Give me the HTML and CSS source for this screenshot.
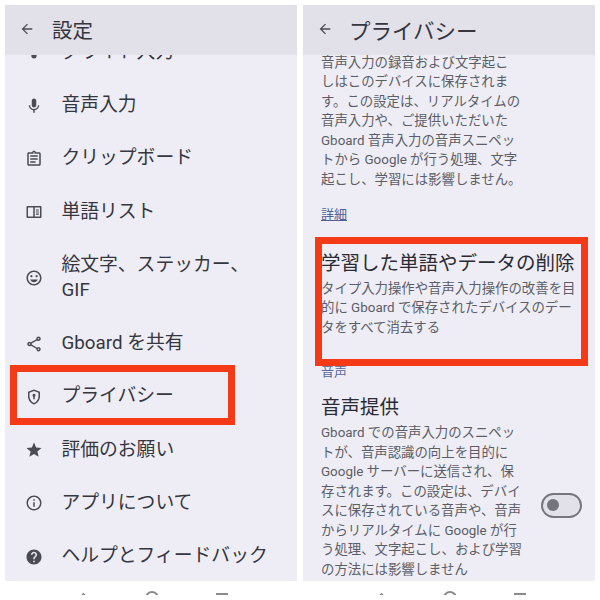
FILE: index.html
```html
<!DOCTYPE html>
<html lang="ja">
<head>
    <meta charset="UTF-8">
    <meta name="viewport" content="width=device-width, initial-scale=1.0">
    <title>Gboard 設定</title>
    <link rel="stylesheet" href="styles.css">
</head>
<body>

    <div class="screens">
        <section class="phone">
            <header class="appbar">
                <svg class="back" viewBox="0 0 24 24"><path d="M20 11H7.830l5.590-5.590L12 4l-8 8 8 8 1.410-1.410L7.830 13H20v-2z"/></svg>
                <h1 class="title title-settings">設定</h1>
            </header>
            <main class="scroll">
                <ul class="menu">
                    <li class="menu-item">
                        <svg class="icon" viewBox="0 0 24 24"><circle cx="12" cy="17" r="3.500"/></svg>
                        <span>グライド入力</span>
                    </li>
                    <li class="menu-item">
                        <svg class="icon" viewBox="0 0 24 24"><path d="M12 14c1.660 0 2.990-1.340 2.990-3L15 5c0-1.660-1.340-3-3-3S9 3.340 9 5v6c0 1.660 1.340 3 3 3zm5.300-3c0 3-2.540 5.100-5.300 5.100S6.700 14 6.700 11H5c0 3.410 2.720 6.230 6 6.720V21h2v-3.280c3.280-.48 6-3.300 6-6.720h-1.700z"/></svg>
                        <span>音声入力</span>
                    </li>
                    <li class="menu-item">
                        <svg class="icon" viewBox="0 0 24 24"><path d="M19 3h-4.180C14.400 1.840 13.300 1 12 1s-2.400.84-2.820 2H5c-1.100 0-2 .9-2 2v14c0 1.100.9 2 2 2h14c1.100 0 2-.9 2-2V5c0-1.100-.9-2-2-2zm-7 0c.55 0 1 .45 1 1s-.45 1-1 1-1-.45-1-1 .45-1 1-1zm7 16H5V5h14v14z"/><path d="M7 7h10v2H7zM7 11h10v2H7zM7 15h7v2H7z"/></svg>
                        <span>クリップボード</span>
                    </li>
                    <li class="menu-item">
                        <svg class="icon" viewBox="0 0 24 24"><path d="M3 4h18c.55 0 1 .45 1 1v14c0 .55-.45 1-1 1H3c-.55 0-1-.45-1-1V5c0-.55.45-1 1-1zm1 2v12h7V6H4zm9 0v12h7V6h-7z"/><path d="M14.500 8.500h4v1.500h-4zM14.500 11.250h4v1.500h-4zM14.500 14h4v1.500h-4z"/></svg>
                        <span>単語リスト</span>
                    </li>
                    <li class="menu-item menu-item-tall">
                        <svg class="icon" viewBox="0 0 24 24"><path d="M12 2C6.480 2 2 6.480 2 12s4.480 10 10 10 10-4.480 10-10S17.520 2 12 2zm0 18c-4.420 0-8-3.580-8-8s3.580-8 8-8 8 3.580 8 8-3.580 8-8 8z"/><circle cx="8.500" cy="9.500" r="1.500"/><circle cx="15.500" cy="9.500" r="1.500"/><path d="M12 17.500c2.330 0 4.310-1.460 5.110-3.500H6.890c.8 2.040 2.780 3.500 5.110 3.500z"/></svg>
                        <span>絵文字、ステッカー、<br>GIF</span>
                    </li>
                    <li class="menu-item">
                        <svg class="icon" viewBox="0 0 24 24"><path d="M18 16.080c-.76 0-1.440.3-1.960.77L8.910 12.700c.05-.23.09-.46.09-.7s-.04-.47-.09-.7l7.050-4.110c.54.500 1.250.81 2.040.81 1.660 0 3-1.340 3-3s-1.340-3-3-3-3 1.340-3 3c0 .24.04.47.09.7L8.040 9.810C7.500 9.310 6.790 9 6 9c-1.660 0-3 1.340-3 3s1.340 3 3 3c.79 0 1.500-.31 2.040-.81l7.120 4.160c-.05.21-.08.43-.08.650 0 1.610 1.310 2.920 2.920 2.920 1.610 0 2.920-1.310 2.920-2.920s-1.310-2.920-2.920-2.920zM18 4c.55 0 1 .45 1 1s-.45 1-1 1-1-.45-1-1 .45-1 1-1zM6 13c-.55 0-1-.45-1-1s.45-1 1-1 1 .45 1 1-.45 1-1 1zm12 7.020c-.55 0-1-.45-1-1s.45-1 1-1 1 .45 1 1-.45 1-1 1z"/></svg>
                        <span>Gboard を共有</span>
                    </li>
                    <li class="menu-item">
                        <svg class="icon" viewBox="0 0 24 24"><path d="M12 2 4 5v6.090c0 5.050 3.410 9.760 8 10.910 4.590-1.150 8-5.860 8-10.910V5l-8-3zm6 9.090c0 4-2.550 7.700-6 8.830-3.450-1.130-6-4.820-6-8.830V6.390l6-2.250 6 2.250v4.700z"/><path d="M12 7.800a2 2 0 0 0-1 3.730V15h2v-3.470a2 2 0 0 0-1-3.730z"/></svg>
                        <span>プライバシー</span>
                    </li>
                    <li class="menu-item">
                        <svg class="icon" viewBox="0 0 24 24"><path d="M12 17.270 18.180 21l-1.640-7.030L22 9.240l-7.190-.61L12 2 9.190 8.630 2 9.240l5.460 4.730L5.820 21z"/></svg>
                        <span>評価のお願い</span>
                    </li>
                    <li class="menu-item">
                        <svg class="icon" viewBox="0 0 24 24"><path d="M11 7h2v2h-2zm0 4h2v6h-2zm1-9C6.480 2 2 6.480 2 12s4.480 10 10 10 10-4.480 10-10S17.520 2 12 2zm0 18c-4.410 0-8-3.590-8-8s3.590-8 8-8 8 3.590 8 8-3.590 8-8 8z"/></svg>
                        <span>アプリについて</span>
                    </li>
                    <li class="menu-item">
                        <svg class="icon" viewBox="0 0 24 24"><path d="M12 2C6.480 2 2 6.480 2 12s4.480 10 10 10 10-4.480 10-10S17.520 2 12 2zm1 17h-2v-2h2v2zm2.070-7.750-.9.920C13.450 12.900 13 13.500 13 15h-2v-.5c0-1.100.45-2.100 1.170-2.830l1.240-1.260c.37-.36.59-.86.59-1.410 0-1.100-.9-2-2-2s-2 .9-2 2H8c0-2.210 1.790-4 4-4s4 1.790 4 4c0 .88-.36 1.680-.93 2.250z"/></svg>
                        <span>ヘルプとフィードバック</span>
                    </li>
                </ul>
            </main>
            <nav class="navbar">
                <span class="nav-back"></span>
                <span class="nav-home"></span>
                <span class="nav-recent"></span>
            </nav>
            <div class="highlight highlight-menu"></div>
        </section>

        <section class="phone">
            <header class="appbar">
                <svg class="back" viewBox="0 0 24 24"><path d="M20 11H7.830l5.590-5.590L12 4l-8 8 8 8 1.410-1.410L7.830 13H20v-2z"/></svg>
                <h1 class="title">プライバシー</h1>
            </header>
            <main class="scroll scroll-text">
                <p class="desc desc-intro">音声入力の録音および文字起こ<br>しはこのデバイスに保存されま<br>す。この設定は、リアルタイムの<br>音声入力や、ご提供いただいた<br>Gboard 音声入力の音声スニペッ<br>トから Google が行う処理、文字<br>起こし、学習には影響しません。</p>
                <a class="more" href="#">詳細</a>
                <div class="setting-delete">
                    <h2 class="setting-name">学習した単語やデータの削除</h2>
                    <p class="desc">タイプ入力操作や音声入力操作の改善を目<br>的に Gboard で保存されたデバイスのデー<br>タをすべて消去する</p>
                </div>
                <div class="section-label">音声</div>
                <div class="setting-voice">
                    <div>
                        <h2 class="setting-name">音声提供</h2>
                        <p class="desc">Gboard での音声入力のスニペッ<br>トが、音声認識の向上を目的に<br>Google サーバーに送信され、保<br>存されます。この設定は、デバイ<br>スに保存されている音声や、音声<br>からリアルタイムに Google が行<br>う処理、文字起こし、および学習<br>の方法には影響しません</p>
                    </div>
                    <span class="toggle"><span class="toggle-dot"></span></span>
                </div>
            </main>
            <nav class="navbar">
                <span class="nav-back"></span>
                <span class="nav-home"></span>
                <span class="nav-recent"></span>
            </nav>
            <div class="highlight highlight-delete"></div>
        </section>
    </div>

</body>
</html>
```

FILE: styles.css
```css
* {
    box-sizing: border-box;
}
html, body {
    height: 100%;
}
body {
    margin: 0;
    background: #fff;
    color: #35363e;
    font-family: Roboto, "Noto Sans CJK JP", sans-serif;
    overflow: hidden;
}
.screens {
    display: flex;
    gap: 6px;
    padding: 5px 5px 0;
    height: 600px;
}
.phone {
    position: relative;
    width: 292px;
    display: flex;
    flex-direction: column;
}
.appbar {
    height: 50px;
    flex: none;
    display: flex;
    align-items: center;
    padding: 0 0 2px 14px;
    background: #e2e1ea;
    position: relative;
    z-index: 1;
}
.back {
    width: 16px;
    height: 16px;
    fill: #4a4b53;
}
.title {
    margin: 0 0 0 16px;
    font-size: 21.500px;
    font-weight: 400;
}
.title-settings {
    margin-left: 17px;
    font-size: 20.500px;
}
.scroll {
    height: 526px;
    flex: none;
    background: #eeedf6;
    overflow: hidden;
}
.menu {
    list-style: none;
    margin: -29.300px 0 0;
    padding: 0;
}
.menu-item {
    height: 53.300px;
    display: flex;
    align-items: center;
    gap: 18.500px;
    padding-left: 20px;
    font-size: 18.800px;
    line-height: 25px;
}
.menu-item-tall {
    height: 78px;
}
.icon {
    width: 18px;
    height: 18px;
    flex: none;
    fill: #4a4b53;
}
.scroll-text {
    padding: 0 12px 0 18px;
}
.desc {
    margin: 0;
    font-size: 13.400px;
    line-height: 19.500px;
    color: #5c5d66;
    white-space: nowrap;
}
.desc-intro {
    margin-top: -2.500px;
}
.more {
    display: inline-block;
    margin-top: 15.500px;
    font-size: 13px;
    line-height: 19px;
    color: #4e6296;
}
.setting-delete {
    margin-top: 26px;
}
.setting-name {
    margin: 0 0 2px;
    font-size: 19.500px;
    font-weight: 400;
    line-height: 27px;
    color: #2a2b33;
    white-space: nowrap;
}
.section-label {
    margin-top: 25px;
    font-size: 13px;
    line-height: 19px;
    color: #56689a;
}
.setting-voice {
    margin-top: 13px;
    display: flex;
    align-items: center;
    justify-content: space-between;
}
.toggle {
    width: 41px;
    height: 25px;
    margin-right: 1px;
    margin-top: 37px;
    border: 2px solid #74757e;
    border-radius: 13px;
    background: #e2e1ea;
    display: flex;
    align-items: center;
    padding-left: 4px;
}
.toggle-dot {
    width: 12px;
    height: 12px;
    border-radius: 50%;
    background: #74757e;
}
/* only the top of the nav buttons shows, the screenshot is cut just below */
.navbar {
    height: 14px;
    flex: none;
    position: relative;
    overflow: hidden;
}
.nav-back, .nav-home, .nav-recent {
    position: absolute;
    width: 11px;
    height: 11px;
    border: 2px solid #8a8a8a;
}
.nav-back {
    left: 72.500px;
    top: 14.300px;
    transform: rotate(45deg);
}
.nav-home {
    left: 140px;
    top: 10px;
    width: 14px;
    height: 14px;
    border-radius: 50%;
}
.nav-recent {
    left: 211px;
    top: 12px;
    width: 12px;
}
.highlight {
    position: absolute;
    border: 7px solid #f53a17;
    z-index: 2;
}
.highlight-menu {
    left: 5px;
    top: 360px;
    width: 225px;
    height: 60px;
}
.highlight-delete {
    left: 12px;
    top: 232px;
    width: 273px;
    height: 129px;
}
```
